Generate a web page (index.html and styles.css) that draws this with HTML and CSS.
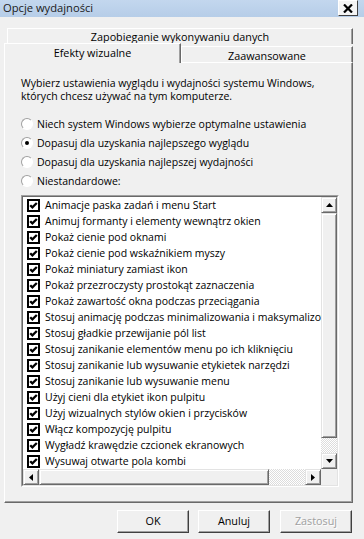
FILE: index.html
```html
<!DOCTYPE html>
<html lang="pl">
<head>
  <meta charset="UTF-8" />
  <title>Opcje wydajności</title>
  <link rel="stylesheet" href="styles.css">
</head>
<body>
  <svg width="0" height="0" class="defs">
    <symbol id="chk" viewBox="0 0 13 13">
      <rect x="1" y="1" width="11" height="11" fill="#fff" stroke="#000" stroke-width="2"/>
      <path d="M3.2 6.2 L5.4 8.4 L9.8 4" fill="none" stroke="#000" stroke-width="2.3"/>
    </symbol>
  </svg>

  <div class="window">
    <div class="titlebar">
      <span class="title">Opcje wydajności</span>
      <div class="close">
        <svg width="10" height="9" viewBox="0 0 10 9"><path d="M1 0.5 L9 8.5 M9 0.5 L1 8.5" stroke="#000" stroke-width="2.2"/></svg>
      </div>
    </div>

    <div class="tabs">
      <div class="tab-row back">
        <div class="tab tab-full">Zapobieganie wykonywaniu danych</div>
      </div>
      <div class="tab-row front">
        <div class="tab tab-selected">Efekty wizualne</div>
        <div class="tab tab-other">Zaawansowane</div>
      </div>
    </div>

    <div class="panel">
      <p class="intro">Wybierz ustawienia wyglądu i wydajności systemu Windows,<br>których chcesz używać na tym komputerze.</p>

      <div class="radios">
        <div class="radio"><span class="dot"></span>Niech system Windows wybierze optymalne ustawienia</div>
        <div class="radio on"><span class="dot"></span>Dopasuj dla uzyskania najlepszego wyglądu</div>
        <div class="radio"><span class="dot"></span>Dopasuj dla uzyskania najlepszej wydajności</div>
        <div class="radio"><span class="dot"></span>Niestandardowe:</div>
      </div>

      <div class="listbox">
        <div class="listbox-inner">
          <div class="list-main">
            <div class="items">
              <div class="item"><svg class="cb"><use href="#chk"/></svg><span>Animacje paska zadań i menu Start</span></div>
              <div class="item"><svg class="cb"><use href="#chk"/></svg><span>Animuj formanty i elementy wewnątrz okien</span></div>
              <div class="item"><svg class="cb"><use href="#chk"/></svg><span>Pokaż cienie pod oknami</span></div>
              <div class="item"><svg class="cb"><use href="#chk"/></svg><span>Pokaż cienie pod wskaźnikiem myszy</span></div>
              <div class="item"><svg class="cb"><use href="#chk"/></svg><span>Pokaż miniatury zamiast ikon</span></div>
              <div class="item"><svg class="cb"><use href="#chk"/></svg><span>Pokaż przezroczysty prostokąt zaznaczenia</span></div>
              <div class="item"><svg class="cb"><use href="#chk"/></svg><span>Pokaż zawartość okna podczas przeciągania</span></div>
              <div class="item"><svg class="cb"><use href="#chk"/></svg><span>Stosuj animację podczas minimalizowania i maksymalizowania okien</span></div>
              <div class="item"><svg class="cb"><use href="#chk"/></svg><span>Stosuj gładkie przewijanie pól list</span></div>
              <div class="item"><svg class="cb"><use href="#chk"/></svg><span>Stosuj zanikanie elementów menu po ich kliknięciu</span></div>
              <div class="item"><svg class="cb"><use href="#chk"/></svg><span>Stosuj zanikanie lub wysuwanie etykietek narzędzi</span></div>
              <div class="item"><svg class="cb"><use href="#chk"/></svg><span>Stosuj zanikanie lub wysuwanie menu</span></div>
              <div class="item"><svg class="cb"><use href="#chk"/></svg><span>Użyj cieni dla etykiet ikon pulpitu</span></div>
              <div class="item"><svg class="cb"><use href="#chk"/></svg><span>Użyj wizualnych stylów okien i przycisków</span></div>
              <div class="item"><svg class="cb"><use href="#chk"/></svg><span>Włącz kompozycję pulpitu</span></div>
              <div class="item"><svg class="cb"><use href="#chk"/></svg><span>Wygładź krawędzie czcionek ekranowych</span></div>
              <div class="item"><svg class="cb"><use href="#chk"/></svg><span>Wysuwaj otwarte pola kombi</span></div>
            </div>
            <div class="vscroll">
              <div class="sb-btn"><svg width="7" height="4" viewBox="0 0 7 4"><path d="M3.5 0 L7 4 L0 4 Z"/></svg></div>
              <div class="sb-thumb v-thumb"></div>
              <div class="sb-track"></div>
              <div class="sb-btn"><svg width="7" height="4" viewBox="0 0 7 4"><path d="M0 0 L7 0 L3.5 4 Z"/></svg></div>
            </div>
          </div>
          <div class="hscroll">
            <div class="sb-btn"><svg width="4" height="7" viewBox="0 0 4 7"><path d="M4 0 L4 7 L0 3.5 Z"/></svg></div>
            <div class="sb-thumb h-thumb"></div>
            <div class="sb-track"></div>
            <div class="sb-btn"><svg width="4" height="7" viewBox="0 0 4 7"><path d="M0 0 L4 3.5 L0 7 Z"/></svg></div>
            <div class="corner"></div>
          </div>
        </div>
      </div>
    </div>

    <div class="buttons">
      <div class="btn">OK</div>
      <div class="btn">Anuluj</div>
      <div class="btn disabled">Zastosuj</div>
    </div>
  </div>
</body>
</html>
```

FILE: styles.css
```css
* {
  box-sizing: border-box;
}
body {
  margin: 0;
  width: 364px;
  height: 539px;
  overflow: hidden;
  background: #f0f0f0;
  font-family: "Open Sans", Lato, sans-serif;
  font-size: 10.5px;
  color: #000;
}
.defs {
  position: absolute;
}
.titlebar {
  height: 17px;
  display: flex;
  justify-content: space-between;
  padding: 0 6px 0 3px;
  background: linear-gradient(#c3d7ee, #b6cde8);
}
.title {
  font-size: 11.2px;
  line-height: 16px;
  color: #1a1a1a;
}
.close {
  width: 20px;
  height: 16px;
  border: 1px solid;
  border-color: #fff #404040 #404040 #fff;
  background: #f4f4f4;
  display: flex;
  align-items: center;
  justify-content: center;
}

/* tabs */
.tabs {
  margin-top: 11px;
  font-size: 10.8px;
}
.tab {
  background: #f0f0f0;
  border-top: 1px solid #fff;
  border-left: 1px solid #fff;
  border-right: 1px solid #696969;
  box-shadow: inset -1px 0 #a0a0a0;
  text-align: center;
}
.tab-full {
  margin-left: 7px;
  width: 346px;
  height: 16px;
  line-height: 15px;
}
.front {
  display: flex;
  align-items: flex-end;
  height: 19px;
  margin-top: -1px;
}
.tab-selected {
  margin-left: 4px;
  width: 177px;
  height: 20px;
  line-height: 18px;
  margin-bottom: -1px;
  position: relative;
  z-index: 1;
}
.tab-other {
  width: 172px;
  height: 16px;
  line-height: 17px;
}

/* panel */
.panel {
  margin-left: 4px;
  width: 349px;
  height: 441px;
  border-top: 1px solid #fff;
  border-left: 1px solid #fff;
  border-right: 1px solid #696969;
  border-bottom: 1px solid #696969;
  box-shadow: inset -1px -1px #a0a0a0;
  padding: 14px 0 0 16px;
}
.intro {
  margin: 0;
  line-height: 13px;
  white-space: nowrap;
}
.radios {
  margin-top: 11px;
}
.radio {
  height: 19px;
  display: flex;
  align-items: center;
}
.dot {
  width: 12px;
  height: 12px;
  border-radius: 50%;
  margin-right: 4px;
  border: 1px solid;
  border-color: #a0a0a0 #fff #fff #a0a0a0;
  background: #fff;
  display: flex;
  align-items: center;
  justify-content: center;
}
.radio.on .dot::after {
  content: "";
  width: 4px;
  height: 4px;
  border-radius: 50%;
  background: #000;
}

/* list box */
.listbox {
  margin-top: 5px;
  width: 318px;
  border: 1px solid;
  border-color: #a0a0a0 #fff #fff #a0a0a0;
}
.listbox-inner {
  border: 1px solid;
  border-color: #696969 #e3e3e3 #e3e3e3 #696969;
  background: #fff;
}
.list-main {
  display: flex;
  height: 272px;
}
.items {
  flex: 1;
  overflow: hidden;
}
.item {
  height: 16px;
  display: flex;
  align-items: center;
  padding-left: 4px;
  white-space: nowrap;
}
.cb {
  width: 13px;
  height: 13px;
  flex: none;
  margin-right: 5px;
}
.vscroll {
  width: 16px;
  display: flex;
  flex-direction: column;
}
.sb-btn {
  width: 16px;
  height: 16px;
  flex: none;
  background: #f0f0f0;
  border: 1px solid;
  border-color: #e3e3e3 #696969 #696969 #e3e3e3;
  box-shadow: inset 1px 1px #fff, inset -1px -1px #a0a0a0;
  display: flex;
  align-items: center;
  justify-content: center;
}
.sb-thumb {
  flex: none;
  background: #f0f0f0;
  border: 1px solid;
  border-color: #e3e3e3 #696969 #696969 #e3e3e3;
  box-shadow: inset 1px 1px #fff, inset -1px -1px #a0a0a0;
}
.v-thumb {
  height: 225px;
}
.sb-track {
  flex: 1;
  background: repeating-conic-gradient(#fff 0 25%, #dcdcdc 0 50%) 0 0 / 2px 2px;
}
.hscroll {
  display: flex;
  height: 16px;
}
.h-thumb {
  width: 230px;
}
.corner {
  width: 16px;
  background: #f0f0f0;
}

/* buttons */
.buttons {
  display: flex;
  margin: 7px 0 0 117px;
  gap: 9px;
  font-size: 10.8px;
}
.btn {
  width: 72px;
  height: 23px;
  line-height: 20px;
  text-align: center;
  background: #f0f0f0;
  border: 1px solid;
  border-color: #fff #404040 #404040 #fff;
  box-shadow: inset -1px -1px #a0a0a0;
}
.btn.disabled {
  color: #a0a0a0;
  text-shadow: 1px 1px #fff;
  margin-left: 1px;
}
```
